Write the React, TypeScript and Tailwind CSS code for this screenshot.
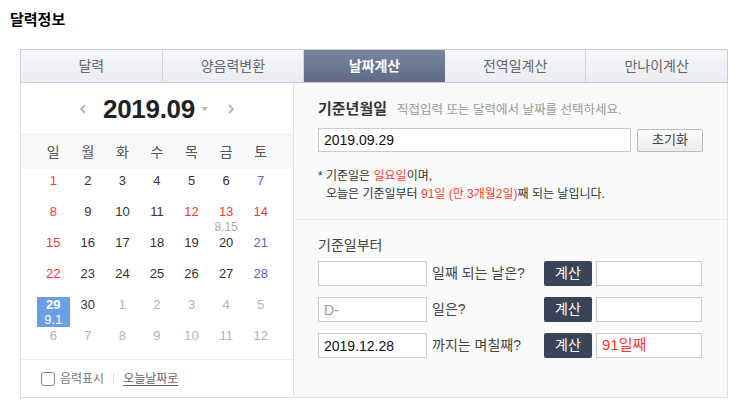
import React from "react";

type Day = { d: number; c: string; sub?: string; sel?: boolean };

const RED = "text-[#f33b3b]";
const BLUE = "text-[#5a66c4]";
const NORM = "text-[#333]";
const GRAY = "text-[#b3b3b3]";

const weeks: Day[][] = [
  [1, 2, 3, 4, 5, 6, 7].map((d, i) => ({ d, c: i === 0 ? RED : i === 6 ? BLUE : NORM })),
  [
    { d: 8, c: RED },
    { d: 9, c: NORM },
    { d: 10, c: NORM },
    { d: 11, c: NORM },
    { d: 12, c: RED },
    { d: 13, c: RED, sub: "8.15" },
    { d: 14, c: RED },
  ],
  [15, 16, 17, 18, 19, 20, 21].map((d, i) => ({ d, c: i === 0 ? RED : i === 6 ? BLUE : NORM })),
  [22, 23, 24, 25, 26, 27, 28].map((d, i) => ({ d, c: i === 0 ? RED : i === 6 ? BLUE : NORM })),
  [
    { d: 29, c: "text-white", sub: "9.1", sel: true },
    { d: 30, c: NORM },
    { d: 1, c: GRAY },
    { d: 2, c: GRAY },
    { d: 3, c: GRAY },
    { d: 4, c: GRAY },
    { d: 5, c: GRAY },
  ],
  [6, 7, 8, 9, 10, 11, 12].map((d) => ({ d, c: GRAY })),
];

const tabs = ["달력", "양음력변환", "날짜계산", "전역일계산", "만나이계산"];
const weekdays = ["일", "월", "화", "수", "목", "금", "토"];

function CalcRow({ value, placeholder, label, result }: { value?: string; placeholder?: string; label: string; result?: string }) {
  return (
    <div className="flex items-center h-[25px]">
      <input
        readOnly
        defaultValue={value}
        placeholder={placeholder}
        className="w-[109px] h-[25px] border border-[#ccc] bg-white px-[5px] text-[14px] text-[#111] placeholder:text-[#999] outline-none"
      />
      <span className="w-[117px] pl-[5px] text-[14px] text-[#444] whitespace-nowrap">{label}</span>
      <button className="w-[48px] h-[25px] rounded-[2px] bg-[#3a4357] text-white text-[14px]">계산</button>
      <div className="ml-[4px] w-[106px] h-[25px] border border-[#ccc] bg-white px-[5px] flex items-center text-[15px] text-[#ff3b2f]">
        {result}
      </div>
    </div>
  );
}

export default function App() {
  return (
    <div className="w-[743px] h-[407px] bg-white overflow-hidden font-['Liberation_Sans','Noto_Sans_CJK_KR',sans-serif]">
      <h1 className="pl-[10px] pt-[9px] h-[49px] text-[15px] font-bold text-black leading-[22px]">달력정보</h1>

      <div className="ml-[20px] w-[708px]">
        {/* tabs */}
        <div className="flex h-[34px] border border-[#c6cbd2]">
          {tabs.map((t, i) => (
            <div
              key={t}
              className={
                i === 2
                  ? "flex-1 flex items-center justify-center bg-gradient-to-b from-[#7886a0] to-[#5d6b84] text-white font-bold text-[14px]"
                  : "flex-1 flex items-center justify-center bg-gradient-to-b from-[#f6f8fa] to-[#e9edf2] text-[#666] text-[14px] border-r border-[#d3d8de] last:border-r-0"
              }
            >
              {t}
            </div>
          ))}
        </div>

        <div className="flex h-[315px]">
          {/* calendar */}
          <div className="w-[273px] bg-white border-l border-b border-[#dedede] flex flex-col">
            <div className="h-[51px] flex items-center justify-center">
              <svg width="6" height="10" viewBox="0 0 6 10" className="mr-[17px]">
                <path d="M5 1 1 5l4 4" fill="none" stroke="#b5b5b5" strokeWidth="1.8" />
              </svg>
              <span className="text-[26px] font-bold text-[#222] leading-none tracking-[-0.3px]">2019.09</span>
              <svg width="7" height="4" viewBox="0 0 7 4" className="ml-[6px] mr-[20px]">
                <path d="M0 0h7L3.5 4z" fill="#bbb" />
              </svg>
              <svg width="6" height="10" viewBox="0 0 6 10">
                <path d="M1 1l4 4-4 4" fill="none" stroke="#b5b5b5" strokeWidth="1.8" />
              </svg>
            </div>

            <div className="h-[35px] bg-[#f8f8f8] border-t border-[#eee] grid grid-cols-7 px-[15px] items-center">
              {weekdays.map((w) => (
                <div key={w} className="text-center text-[14px] text-[#555]">
                  {w}
                </div>
              ))}
            </div>

            <div className="pt-[4px] px-[15px] h-[190px]">
              {weeks.map((row, ri) => (
                <div key={ri} className="grid grid-cols-7 h-[31px]">
                  {row.map((day, ci) => (
                    <div key={ci} className="flex justify-center">
                      <div
                        className={
                          "w-[33px] h-[30px] flex flex-col items-center " + (day.sel ? "bg-[#6a9fe8]" : "")
                        }
                      >
                        <span className={"text-[13px] leading-[16px] " + day.c + (day.sel ? " font-bold" : "")}>{day.d}</span>
                        {day.sub && (
                          <span
                            className={
                              day.sel
                                ? "text-[13px] leading-[13px] text-white"
                                : "text-[12px] leading-[13px] text-[#aaa] mt-[1px]"
                            }
                          >
                            {day.sub}
                          </span>
                        )}
                      </div>
                    </div>
                  ))}
                </div>
              ))}
            </div>

            <div className="flex-1 border-t border-[#eee] flex items-center pl-[20px] text-[12px]">
              <div className="w-[14px] h-[14px] border border-[#888] rounded-[3px] bg-white" />
              <span className="ml-[5px] text-[#777]">음력표시</span>
              <span className="mx-[9px] w-px h-[11px] bg-[#ddd]" />
              <span className="text-[#666] underline underline-offset-2">오늘날짜로</span>
            </div>
          </div>

          {/* calculator */}
          <div className="flex-1 bg-[#fafafa] border-l border-r border-b border-[#e2e2e2] flex flex-col">
            <div className="h-[137px] pl-[24px] pt-[15px] border-b border-[#ececec]">
              <div className="flex items-baseline h-[20px]">
                <span className="text-[15px] font-bold text-[#333]">기준년월일</span>
                <span className="ml-[10px] text-[12.5px] text-[#999]">직접입력 또는 달력에서 날짜를 선택하세요.</span>
              </div>
              <div className="mt-[10px] flex items-center">
                <input
                  readOnly
                  defaultValue="2019.09.29"
                  className="w-[313px] h-[24px] border border-[#ccc] bg-white px-[5px] text-[14px] text-[#111] outline-none"
                />
                <button className="ml-[6px] w-[66px] h-[23px] border border-[#bcbcbc] rounded-[2px] bg-gradient-to-b from-[#fdfdfd] to-[#ececec] text-[13px] text-[#444]">
                  초기화
                </button>
              </div>
              <div className="mt-[15px] text-[12px] text-[#333] leading-[18px]">
                <div>
                  * 기준일은 <span className="text-[#ff3b2f]">일요일</span>이며,
                </div>
                <div className="pl-[8px]">
                  오늘은 기준일부터 <span className="text-[#ff3b2f]">91일 (만 3개월2일)</span>째 되는 날입니다.
                </div>
              </div>
            </div>

            <div className="pl-[24px] pt-[15px] flex flex-col">
              <div className="text-[14px] text-[#444] leading-[20px]">기준일부터</div>
              <div className="mt-[6px] flex flex-col gap-[11px]">
                <CalcRow label="일째 되는 날은?" />
                <CalcRow placeholder="D-" label="일은?" />
                <CalcRow value="2019.12.28" label="까지는 며칠째?" result="91일째" />
              </div>
            </div>
          </div>
        </div>
      </div>
    </div>
  );
}
